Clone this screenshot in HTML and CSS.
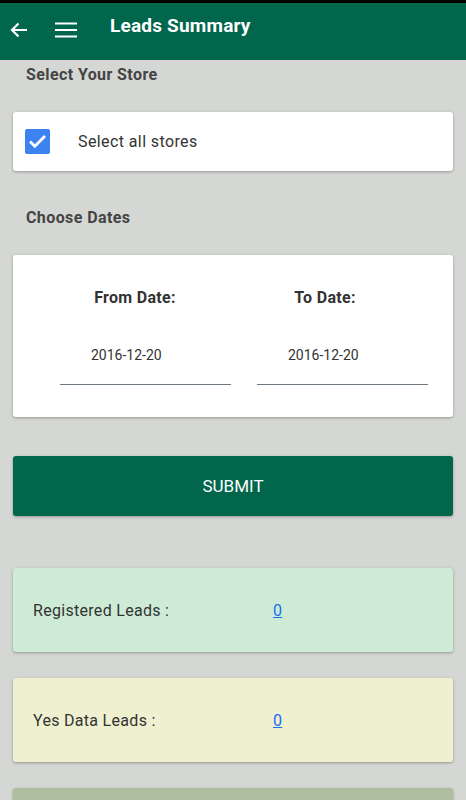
FILE: index.html
```html
<!DOCTYPE html>
<html lang="en">
<head>
    <meta charset="UTF-8">
    <meta name="viewport" content="width=device-width, initial-scale=1.0">
    <title>Leads Summary</title>
    <link rel="stylesheet" href="styles.css">
</head>
<body>
    <header class="barra">
        <button class="icone" aria-label="Back">
            <svg width="20" height="20" viewBox="0 0 20 20">
                <path d="M18 10H3M9.5 3.5L3 10l6.5 6.5" fill="none" stroke="#fff" stroke-width="2.2"/>
            </svg>
        </button>
        <button class="icone menu" aria-label="Menu">
            <svg width="22" height="18" viewBox="0 0 22 18">
                <path d="M0 2.5h22M0 9h22M0 15.5h22" stroke="#fff" stroke-width="2.2"/>
            </svg>
        </button>
        <h1>Leads Summary</h1>
    </header>

    <main class="conteudo">
        <h2 class="secao">Select Your Store</h2>
        <div class="cartao lojas">
            <span class="caixa">
                <svg width="25" height="25" viewBox="0 0 25 25">
                    <path d="M5 12.5l4.8 4.8L20 7" fill="none" stroke="#fff" stroke-width="2.8"/>
                </svg>
            </span>
            <span>Select all stores</span>
        </div>

        <h2 class="secao datas-titulo">Choose Dates</h2>
        <div class="cartao datas">
            <div class="linha-rotulos">
                <span>From Date:</span>
                <span>To Date:</span>
            </div>
            <div class="linha-campos">
                <div class="campo">2016-12-20</div>
                <div class="campo">2016-12-20</div>
            </div>
        </div>

        <button class="submeter">SUBMIT</button>

        <div class="resumo verde">
            <span class="rotulo">Registered Leads :</span>
            <a href="#">0</a>
        </div>
        <div class="resumo amarelo">
            <span class="rotulo">Yes Data Leads :</span>
            <a href="#">0</a>
        </div>
        <div class="resumo oliva"></div>
    </main>
</body>
</html>
```

FILE: styles.css
```css
:root {
    --cor-primaria: #00664c;
    --cor-fundo: #d5d7d4;
}

body {
    font-family: Roboto, 'Liberation Sans', sans-serif;
    margin: 0;
    background: var(--cor-fundo);
    border-top: 3px solid #000;
    color: #333;
}

.barra {
    height: 57px;
    background: var(--cor-primaria);
    display: flex;
    align-items: flex-start;
    padding-left: 9px;
}

.icone {
    background: none;
    border: 0;
    padding: 0;
    margin-top: 17px;
    width: 20px;
    height: 20px;
    display: flex;
    align-items: center;
    justify-content: center;
}

.menu {
    width: 22px;
    margin-left: 26px;
}

.barra h1 {
    margin: 10px 0 0 33px;
    font-size: 19px;
    line-height: 25px;
    letter-spacing: 0.2px;
    color: #fff;
    font-weight: bold;
}

.conteudo {
    padding: 0 13px 40px;
}

.secao {
    margin: 5px 0 27px 13px;
    font-size: 16px;
    line-height: 20px;
    letter-spacing: 0.4px;
    color: #444;
}

.datas-titulo {
    margin-top: 37px;
}

.cartao {
    background: #fff;
    border-radius: 3px;
    box-shadow: 0 1px 3px rgba(0, 0, 0, 0.3);
}

.lojas {
    height: 59px;
    display: flex;
    align-items: center;
    padding-left: 12px;
    font-size: 16px;
    letter-spacing: 0.4px;
}

.caixa {
    width: 25px;
    height: 25px;
    border-radius: 2px;
    background: #3d82f1;
    margin-right: 28px;
    display: flex;
}

.datas {
    padding: 33px 0 32px;
}

.linha-rotulos {
    display: grid;
    grid-template-columns: 190px 190px;
    padding-left: 27px;
    font-size: 16px;
    line-height: 20px;
    letter-spacing: 0.3px;
    font-weight: bold;
    text-align: center;
}

.linha-campos {
    display: flex;
    gap: 26px;
    padding-left: 47px;
    margin-top: 37px;
}

.campo {
    width: 140px;
    padding: 0 0 19px 31px;
    font-size: 14px;
    line-height: 20px;
    border-bottom: 1.5px solid #6e7883;
}

.submeter {
    display: block;
    width: 100%;
    height: 60px;
    margin-top: 39px;
    border: 0;
    border-radius: 3px;
    background: var(--cor-primaria);
    color: #fff;
    font-family: inherit;
    font-size: 17px;
    box-shadow: 0 1px 3px rgba(0, 0, 0, 0.3);
}

.resumo {
    height: 84px;
    margin-top: 26px;
    border-radius: 3px;
    display: flex;
    align-items: center;
    padding-left: 20px;
    font-size: 16px;
    letter-spacing: 0.3px;
    box-shadow: 0 1px 3px rgba(0, 0, 0, 0.3);
}

.verde {
    margin-top: 52px;
    background: #cdebd5;
}

.amarelo {
    background: #eff0d0;
}

.oliva {
    background: #b0bea0;
}

.rotulo {
    width: 240px;
}

.resumo a {
    color: #1a6ef0;
}
```
